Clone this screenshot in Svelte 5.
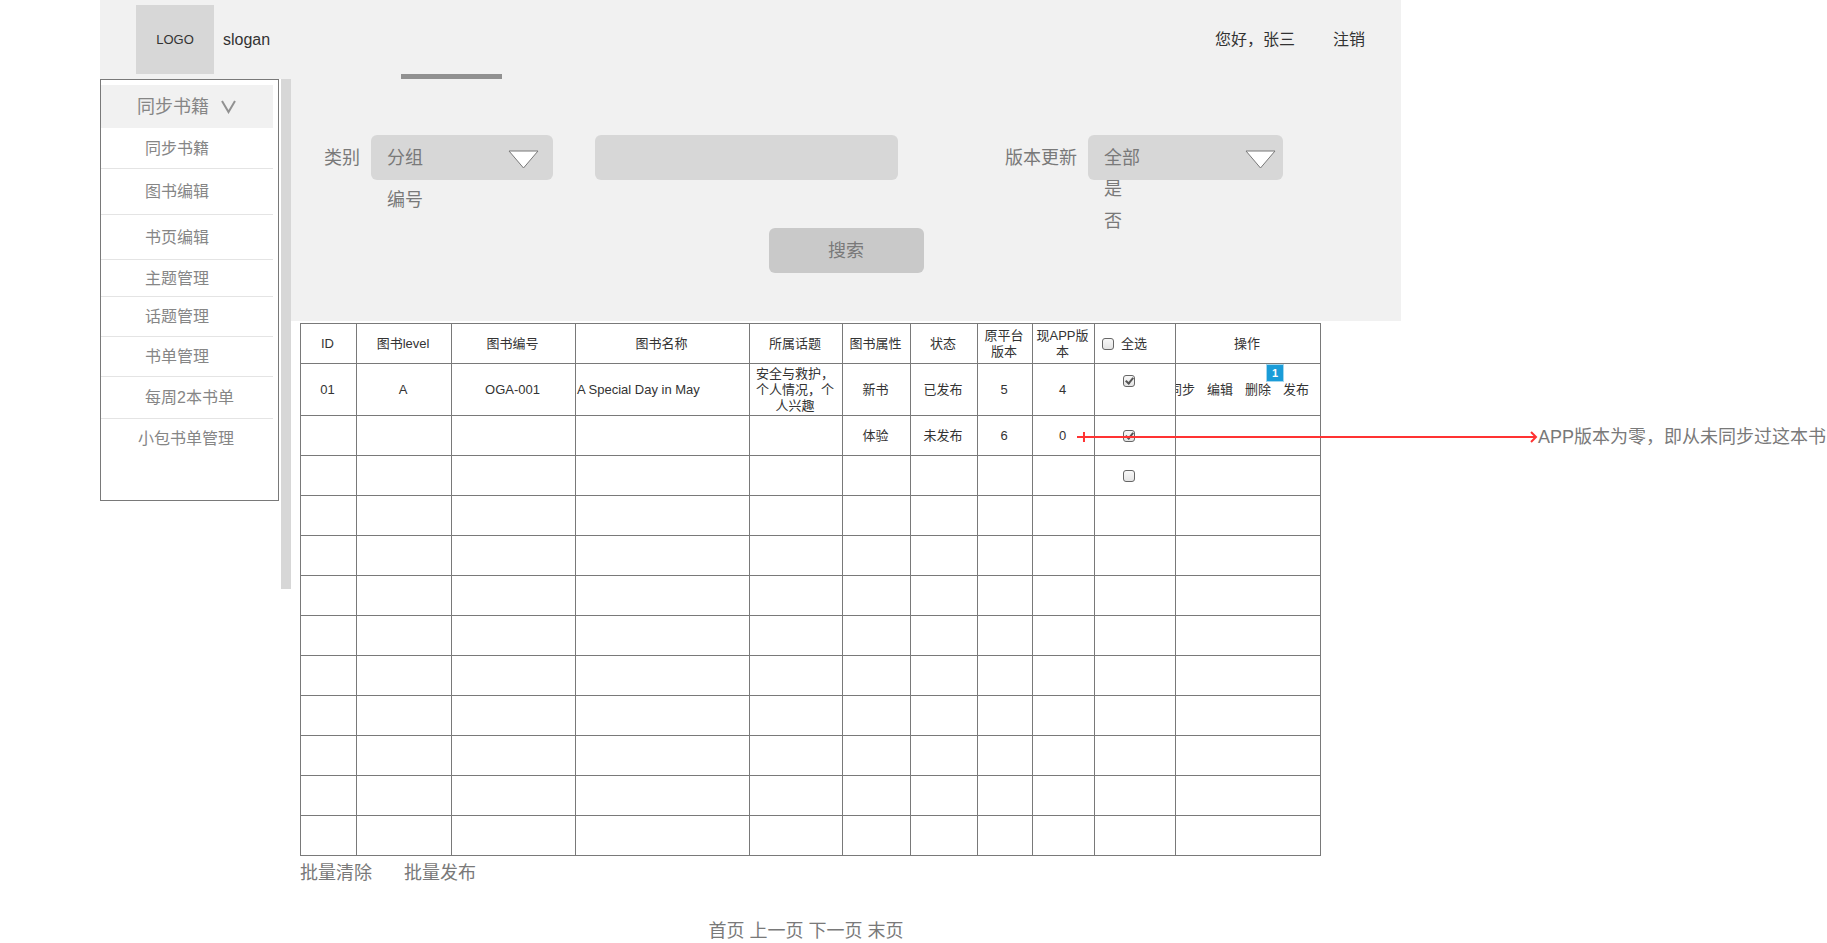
<script lang="ts">
  const menu = [
    "同步书籍",
    "图书编辑",
    "书页编辑",
    "主题管理",
    "话题管理",
    "书单管理",
    "每周2本书单",
    "小包书单管理",
  ];

  const columnWidths = [56, 95, 124, 174, 93, 68, 67, 55, 62, 81, 145];
  const headings = [
    "ID",
    "图书level",
    "图书编号",
    "图书名称",
    "所属话题",
    "图书属性",
    "状态",
    "原平台版本",
    "现APP版本",
  ];
  const actions = ["同步", "编辑", "删除", "发布"];
  const pages = ["首页", "上一页", "下一页", "末页"];
  const emptyRows = Array(9).fill(0);

  let category = $state("分组");
  let updated = $state("全部");
  let keyword = $state("");
  let books = $state([
    {
      cells: ["01", "A", "OGA-001", "A Special Day in May", "安全与救护，个人情况，个人兴趣", "新书", "已发布", "5", "4"],
      checked: true,
      actions: true,
      note: "",
    },
    {
      cells: ["", "", "", "", "", "体验", "未发布", "6", "0"],
      checked: true,
      actions: false,
      note: "APP版本为零，即从未同步过这本书",
    },
    {
      cells: ["", "", "", "", "", "", "", "", ""],
      checked: false,
      actions: false,
      note: "",
    },
  ]);

  const toggleAll = (event: Event) => {
    const checked = (event.target as HTMLInputElement).checked;
    books.forEach((book) => (book.checked = checked));
  };
</script>

{#snippet triangle()}
  <svg class="triangle" viewBox="0 0 31 19" aria-hidden="true">
    <path d="M1 1H30L15.5 18Z" fill="#fff" stroke="#797979" />
  </svg>
{/snippet}

<div class="page">
  <header>
    <div class="brand">
      <div class="logo">LOGO</div>
      <span>slogan</span>
    </div>
    <div class="indicator"></div>
    <div class="user">
      <span>您好，张三</span>
      <a href="#logout">注销</a>
    </div>
  </header>

  <div class="body">
    <nav class="sidebar">
      <button class="group">
        同步书籍
        <svg class="chevron" viewBox="0 0 15 14" aria-hidden="true">
          <path d="M1 1L7.5 12L14 1" fill="none" stroke="#919191" stroke-width="2" />
        </svg>
      </button>
      <ul class="menu">
        {#each menu as item}
          <li class:wide={item.length > 5 && !item.includes("2")}><a href="#menu">{item}</a></li>
        {/each}
      </ul>
    </nav>
    <div class="scrollbar"></div>

    <main>
      <form class="filters" onsubmit={(e) => e.preventDefault()}>
        <div class="fields">
          <label for="category">类别</label>
          <div class="select category">
            <select id="category" bind:value={category}>
              <option>分组</option>
              <option>编号</option>
            </select>
            {@render triangle()}
            <ul class="options">
              <li>编号</li>
            </ul>
          </div>
          <input class="keyword" type="text" aria-label="关键字" bind:value={keyword} />
          <label class="last" for="updated">版本更新</label>
          <div class="select updated">
            <select id="updated" bind:value={updated}>
              <option>全部</option>
              <option>是</option>
              <option>否</option>
            </select>
            {@render triangle()}
            <ul class="options">
              <li>是</li>
              <li>否</li>
            </ul>
          </div>
        </div>
        <button class="search">搜索</button>
      </form>

      <div class="content">
        <table>
          <colgroup>
            {#each columnWidths as width}
              <col style="width: {width}px" />
            {/each}
          </colgroup>
          <thead>
            <tr>
              {#each headings as heading}
                <th>{heading}</th>
              {/each}
              <th>
                <label class="all"><input type="checkbox" onchange={toggleAll} />全选</label>
              </th>
              <th>操作</th>
            </tr>
          </thead>
          <tbody>
            {#each books as book}
              <tr class:filled={book.actions}>
                {#each book.cells as cell, i}
                  <td class:name={i === 3} class:noted={i === 8 && book.note}>
                    {cell}
                    {#if i === 8 && book.note}
                      <div class="note">
                        <svg class="arrow" viewBox="0 0 462 12" aria-hidden="true">
                          <path d="M0 6H460M7 1V11M455 1L460 6L455 11" fill="none" stroke="#ff3333" stroke-width="2" />
                        </svg>
                        <span>{book.note}</span>
                      </div>
                    {/if}
                  </td>
                {/each}
                <td class="check">
                  <input type="checkbox" aria-label="选择" bind:checked={book.checked} />
                </td>
                <td class="operate">
                  {#if book.actions}
                    <div class="actions">
                      {#each actions as action}
                        <a href="#action">{action}</a>
                      {/each}
                    </div>
                    <span class="badge">1</span>
                  {/if}
                </td>
              </tr>
            {/each}
            {#each emptyRows as _}
              <tr>
                {#each columnWidths as _}
                  <td></td>
                {/each}
              </tr>
            {/each}
          </tbody>
        </table>

        <div class="batch">
          <button>批量清除</button>
          <button>批量发布</button>
        </div>
        <nav class="pages">
          {#each pages as page}
            <a href="#page">{page}</a>
          {/each}
        </nav>
      </div>
    </main>
  </div>
</div>

<style>
  :global(body) {
    margin: 0;
    background-color: #fff;
  }
  .page {
    box-sizing: border-box;
    padding: 0 426px 0 100px;
    overflow: hidden;
    color: #797979;
    font-family: "Liberation Sans", "Noto Sans CJK SC", sans-serif;
    font-size: 18px;
    line-height: 22px;
  }
  button,
  select,
  input {
    box-sizing: border-box;
    margin: 0;
    padding: 0;
    border: none;
    background: none;
    color: inherit;
    font: inherit;
  }
  a {
    color: inherit;
    text-decoration: none;
  }
  ul {
    margin: 0;
    padding: 0;
    list-style: none;
  }

  header {
    display: flex;
    height: 79px;
    background-color: #f1f1f1;
    color: #333;
    font-size: 16px;
  }
  .brand {
    display: flex;
    align-items: center;
    gap: 9px;
    width: 265px;
    padding-left: 36px;
  }
  .logo {
    display: flex;
    align-items: center;
    justify-content: center;
    width: 78px;
    height: 69px;
    background-color: #d7d7d7;
    font-size: 13px;
  }
  .indicator {
    align-self: flex-end;
    width: 101px;
    height: 5px;
    background-color: #919191;
  }
  .user {
    display: flex;
    align-items: center;
    gap: 38px;
    margin-left: auto;
    padding-right: 36px;
  }

  .body {
    display: flex;
    align-items: flex-start;
  }
  .sidebar {
    box-sizing: border-box;
    flex: none;
    width: 179px;
    margin-right: 2px;
    padding: 5px 5px 43px 0;
    border: 1px solid #797979;
    color: #868686;
  }
  .group {
    display: flex;
    align-items: center;
    gap: 12px;
    width: 100%;
    height: 43px;
    padding-left: 36px;
    background-color: #f1f1f1;
  }
  .chevron {
    width: 15px;
    height: 14px;
  }
  .menu {
    display: grid;
    grid-template-rows: 41px 46px 45px 37px 40px 40px 42px 38px;
    font-size: 16px;
  }
  .menu li {
    display: flex;
    align-items: center;
    padding-top: 1px;
    padding-left: 44px;
    border-bottom: 1px solid #e4e4e4;
  }
  .menu .wide {
    padding-left: 37px;
  }
  .menu li:last-child {
    border-bottom: none;
  }
  .scrollbar {
    flex: none;
    width: 10px;
    height: 510px;
    background-color: #d7d7d7;
  }

  main {
    flex: 1;
    min-width: 0;
  }
  .filters {
    padding: 56px 0 48px;
    background-color: #f1f1f1;
  }
  .fields {
    display: flex;
    align-items: center;
    gap: 11px;
    padding: 0 118px 0 33px;
  }
  label {
    white-space: nowrap;
  }
  .last {
    margin-left: auto;
  }
  .select {
    position: relative;
    height: 45px;
  }
  .category {
    width: 182px;
  }
  .updated {
    width: 195px;
  }
  select {
    appearance: none;
    width: 100%;
    height: 45px;
    padding: 0 16px;
    border-radius: 6px;
    background-color: #d7d7d7;
  }
  .triangle {
    position: absolute;
    top: 15px;
    right: 7px;
    width: 31px;
    height: 19px;
    pointer-events: none;
  }
  .category .triangle {
    right: 14px;
  }
  .options {
    position: absolute;
    top: 45px;
    left: 16px;
    display: grid;
    gap: 14px;
    line-height: 18px;
  }
  .category .options {
    padding-top: 11px;
  }
  .keyword {
    width: 303px;
    height: 45px;
    margin-left: 31px;
    padding: 0 16px;
    border-radius: 6px;
    background-color: #d7d7d7;
  }
  .search {
    display: block;
    width: 155px;
    height: 45px;
    margin: 48px auto 0;
    border-radius: 6px;
    background-color: #c9c9c9;
  }

  .content {
    padding: 2px 81px 0 9px;
  }
  table {
    width: 100%;
    table-layout: fixed;
    border-collapse: collapse;
    color: #333;
    font-size: 13px;
    line-height: 16px;
    text-align: center;
  }
  tr {
    height: 40px;
  }
  .filled {
    height: 52px;
  }
  th,
  td {
    padding: 0 3px 0 1px;
    border: 1px solid #797979;
    font-weight: inherit;
  }
  .name {
    text-align: left;
  }
  input[type="checkbox"] {
    position: relative;
    appearance: none;
    flex: none;
    width: 12px;
    height: 12px;
    border: 1px solid #666;
    border-radius: 3px;
    background: linear-gradient(#f8f8f8, #e4e4e4);
  }
  input[type="checkbox"]:checked::after {
    position: absolute;
    top: 0;
    left: 3px;
    width: 3px;
    height: 6px;
    border: solid #555;
    border-width: 0 2px 2px 0;
    content: "";
    transform: rotate(40deg);
  }
  .all {
    display: flex;
    align-items: center;
    gap: 7px;
    padding-left: 6px;
  }
  .check {
    padding-left: 28px;
    text-align: left;
  }
  .check input {
    display: block;
  }
  .filled .check {
    padding-top: 11px;
    vertical-align: top;
  }
  .operate {
    position: relative;
    padding: 0;
  }
  .actions {
    display: flex;
    justify-content: flex-end;
    gap: 12px;
    padding-right: 11px;
    overflow: hidden;
    white-space: nowrap;
  }
  .badge {
    position: absolute;
    top: 0;
    right: 36px;
    box-sizing: border-box;
    width: 18px;
    height: 18px;
    border: 1px solid #a3d7ee;
    background-color: #1a9cd8;
    color: #fff;
    font-size: 11px;
    font-weight: bold;
  }
  .noted {
    position: relative;
  }
  .note {
    position: absolute;
    top: 10px;
    left: 44px;
    z-index: 1;
    display: flex;
    align-items: center;
    color: #797979;
    font-size: 18px;
    line-height: 22px;
    white-space: nowrap;
    pointer-events: none;
  }
  .arrow {
    width: 461px;
    height: 12px;
  }

  .batch {
    display: flex;
    gap: 32px;
    padding-top: 6px;
  }
  .pages {
    display: flex;
    justify-content: center;
    gap: 5px;
    padding: 36px 8px 1px 0;
  }
</style>
